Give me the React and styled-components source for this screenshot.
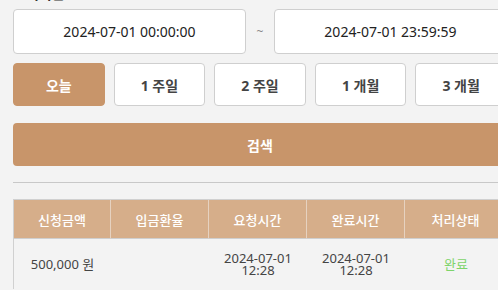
import React from 'react'
import styled, { createGlobalStyle } from 'styled-components'

const GlobalStyle = createGlobalStyle`
  html, body {
    margin: 0;
    padding: 0;
    background: #f3f3f3;
    overflow: hidden;
  }
  body {
    font-family: "Noto Sans", "Noto Sans CJK KR", sans-serif;
  }
`;

const Wrapper = styled.div`
  width: 494px;
  padding-left: 13px;
`;

const Label = styled.div`
  margin-top: -16px;
  height: 20px;
  line-height: 20px;
  font-size: 14px;
  font-weight: bold;
  color: #333;
  margin-bottom: 5px;
`;

const DateRow = styled.div`
  display: grid;
  grid-template-columns: 1fr 28px 1fr;
  align-items: center;
`;

const DateInput = styled.div`
  height: 43px;
  background: #fff;
  border: 1px solid #cfcfcf;
  border-radius: 4px;
  display: flex;
  align-items: center;
  justify-content: center;
  font-size: 14px;
  color: #222;
`;

const Tilde = styled.span`
  text-align: center;
  color: #888;
  font-size: 12px;
`;

const PeriodRow = styled.div`
  display: grid;
  grid-template-columns: repeat(5, 1fr);
  gap: 9px;
  margin-top: 9px;
`;

const PeriodButton = styled.button`
  height: 43px;
  border-radius: 4px;
  border: 1px solid ${p => (p.$active ? '#c8956a' : '#cfcfcf')};
  background: ${p => (p.$active ? '#c8956a' : '#fff')};
  color: ${p => (p.$active ? '#fff' : '#444')};
  font-family: inherit;
  font-size: 14px;
  font-weight: bold;
  padding: 0;
`;

const SearchButton = styled.button`
  display: block;
  width: 100%;
  height: 43px;
  margin-top: 17px;
  border: none;
  border-radius: 4px;
  background: #c8956a;
  color: #fff;
  font-family: inherit;
  font-size: 14px;
  font-weight: bold;
`;

const Divider = styled.hr`
  margin: 16px 0 0;
  border: none;
  border-top: 1px solid #c8c8c8;
`;

const Table = styled.div`
  margin-top: 16px;
  border-top: 1px solid #d0d0d0;
  border-left: 1px solid #d0d0d0;
`;

const Row = styled.div`
  display: grid;
  grid-template-columns: 97px 98px 98px 98px 1fr;
`;

const HeadCell = styled.div`
  height: 38px;
  background: #d6ae8a;
  color: #fff;
  font-size: 13px;
  font-weight: 500;
  display: flex;
  align-items: center;
  justify-content: center;
  border-right: 1px solid #e6d2c0;
  border-bottom: 1px solid #cfcfcf;
`;

const Cell = styled.div`
  height: 50px;
  display: flex;
  align-items: center;
  justify-content: center;
  text-align: center;
  font-size: 13px;
  line-height: ${p => (p.$stacked ? '12px' : '20px')};
  color: ${p => p.$color || '#444'};
`;

const headers = ['신청금액', '입금환율', '요청시간', '완료시간', '처리상태'];
const periods = ['오늘', '1 주일', '2 주일', '1 개월', '3 개월'];

export default function App() {
  return (
    <Wrapper>
      <GlobalStyle />
      <Label>조회기간</Label>
      <DateRow>
        <DateInput>2024-07-01 00:00:00</DateInput>
        <Tilde>~</Tilde>
        <DateInput>2024-07-01 23:59:59</DateInput>
      </DateRow>
      <PeriodRow>
        {periods.map((p, i) => (
          <PeriodButton key={p} $active={i === 0}>{p}</PeriodButton>
        ))}
      </PeriodRow>
      <SearchButton>검색</SearchButton>
      <Divider />
      <Table>
        <Row>
          {headers.map(h => <HeadCell key={h}>{h}</HeadCell>)}
        </Row>
        <Row>
          <Cell>500,000 원</Cell>
          <Cell></Cell>
          <Cell $stacked>2024-07-01<br />12:28</Cell>
          <Cell $stacked>2024-07-01<br />12:28</Cell>
          <Cell $color="#7dd46a">완료</Cell>
        </Row>
      </Table>
    </Wrapper>
  )
}
